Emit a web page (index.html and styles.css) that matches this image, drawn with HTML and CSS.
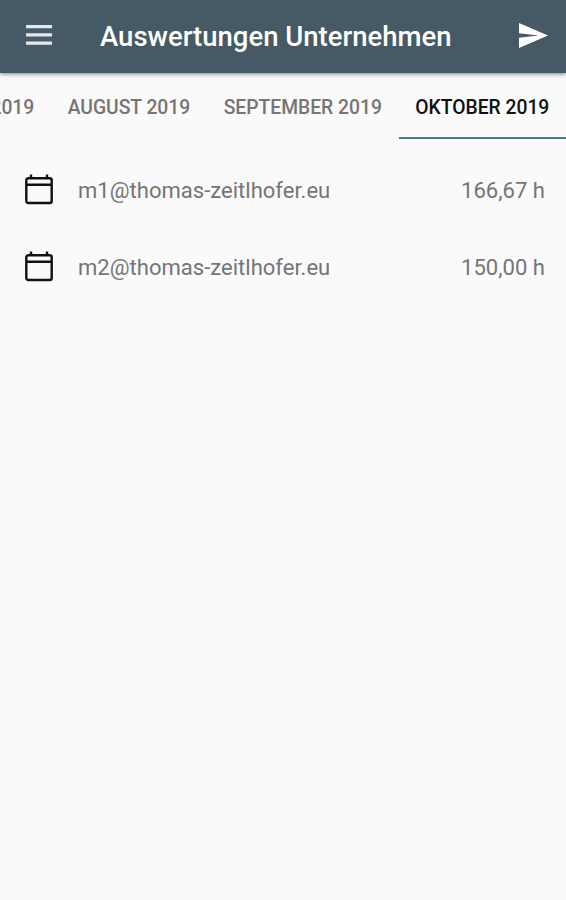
FILE: index.html
```html
<!DOCTYPE html>
<html lang="de">
<head>
  <meta charset="UTF-8">
  <title>Auswertungen Unternehmen</title>
  <link rel="stylesheet" href="styles.css">
</head>
<body>

  <header class="toolbar">
    <svg class="menu-icon" viewBox="0 0 26 20">
      <path d="M0 0h26v3.300H0zM0 8.200h26v3.300H0zM0 16.400h26v3.300H0z"/>
    </svg>
    <h1>Auswertungen Unternehmen</h1>
    <svg class="send-icon" viewBox="2 3 21 18" preserveAspectRatio="none">
      <path d="M2 21 23 12 2 3v7.300l14 1.700-14 1.700z"/>
    </svg>
  </header>

  <nav class="tabs">
    <a class="tab">Juli 2019</a>
    <a class="tab">August 2019</a>
    <a class="tab">September 2019</a>
    <a class="tab active">Oktober 2019</a>
  </nav>

  <main class="list">
    <div class="row">
      <svg class="calendar-icon" viewBox="0 0 28 32">
        <rect x="1.300" y="4.200" width="25.400" height="24.800" rx="2"/>
        <path d="M1.300 10.700h25.400M6 .5v4M22 .5v4"/>
      </svg>
      <span class="name">m1@thomas-zeitlhofer.eu</span>
      <span class="hours">166,67 h</span>
    </div>
    <div class="row">
      <svg class="calendar-icon" viewBox="0 0 28 32">
        <rect x="1.300" y="4.200" width="25.400" height="24.800" rx="2"/>
        <path d="M1.300 10.700h25.400M6 .5v4M22 .5v4"/>
      </svg>
      <span class="name">m2@thomas-zeitlhofer.eu</span>
      <span class="hours">150,00 h</span>
    </div>
  </main>

</body>
</html>
```

FILE: styles.css
```css
body {
  margin: 0;
  height: 900px;
  overflow: hidden;
  background: #fafafa;
  color: #757575;
  font-family: Roboto, sans-serif;
}

.toolbar {
  display: flex;
  align-items: center;
  box-sizing: border-box;
  height: 73px;
  padding: 0 18px 3px 26px;
  background: #455a64;
  box-shadow: 0 1px 4px rgba(0,0,0,0.5);
  color: #fff;
}

h1 {
  flex: 1;
  margin: 0 0 0 48px;
  padding-top: 4px;
  font-size: 27.5px;
  font-weight: 500;
  line-height: 32px;
  white-space: nowrap;
}

.menu-icon {
  width: 26px;
  height: 20px;
  fill: #e4e8ea;
}

.send-icon {
  width: 29px;
  height: 25px;
  fill: #fff;
}

.tabs {
  display: flex;
  justify-content: flex-end;
  height: 66px;
}

.tab {
  box-sizing: border-box;
  flex: none;
  height: 66px;
  padding: 0 16.7px;
  font-size: 19.3px;
  font-weight: 500;
  line-height: 70px;
  text-transform: uppercase;
  white-space: nowrap;
}

.tab.active {
  border-bottom: 2px solid #47798a;
  color: #111;
}

.list {
  padding-top: 13px;
}

.row {
  display: flex;
  align-items: center;
  height: 77px;
  padding: 0 21px 0 25px;
  font-size: 22.05px;
}

.calendar-icon {
  width: 28px;
  height: 32px;
  margin: 0 25px 2px 0;
  fill: none;
  stroke: #111;
  stroke-width: 2.4;
}

.name {
  flex: 1;
}
```
